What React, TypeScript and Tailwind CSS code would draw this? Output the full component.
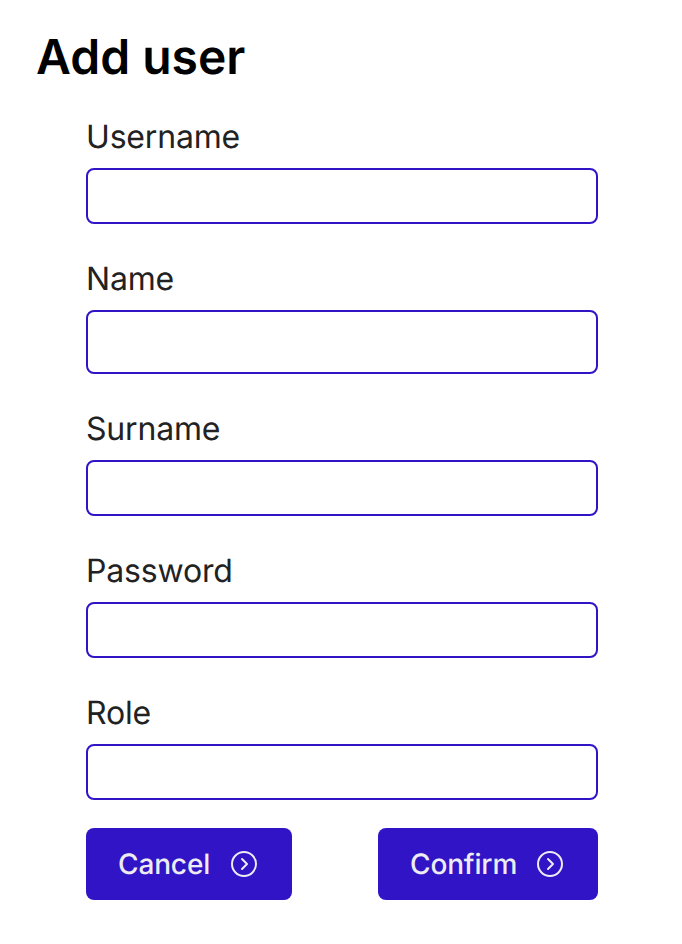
const fields = [
  { label: "Username", box: "h-14" },
  { label: "Name", box: "h-16" },
  { label: "Surname", box: "h-14" },
  { label: "Password", box: "h-14" },
  { label: "Role", box: "h-14" },
];

function ChevronCircle() {
  return (
    <svg className="h-8 w-8" viewBox="0 0 32 32" fill="none" stroke="currentColor" strokeWidth="2">
      <circle cx="16" cy="16" r="12" />
      <path d="M14 11l5 5-5 5" strokeLinecap="round" strokeLinejoin="round" />
    </svg>
  );
}

function ActionButton({ label, size }: { label: string; size: string }) {
  return (
    <button
      type="button"
      className={`flex h-[72px] items-center justify-between rounded-lg bg-[#3114c6] px-8 text-[28px] leading-8 font-medium tracking-[-0.14px] text-[#eeecf3] [text-rendering:geometricPrecision] ${size}`}
    >
      <span>{label}</span>
      <ChevronCircle />
    </button>
  );
}

export default function App() {
  return (
    <main className="h-[944px] w-[682px] bg-white pt-7 font-['Inter',sans-serif] antialiased [text-rendering:geometricPrecision]">
      <h1 className="pl-9 text-[48px] leading-[58px] font-semibold text-black">Add user</h1>
      <form className="ml-[86px] w-[512px] pt-[31px]">
        <div className="flex flex-col gap-[35px]">
          {fields.map((f) => (
            <label key={f.label} className="block text-[32px] leading-[40px] font-normal tracking-[-0.18px] text-[#222222]">
              <span className="block">{f.label}</span>
              <input className={`mt-[11px] block w-full rounded-lg border-2 border-[#3114c6] bg-white px-4 outline-none ${f.box}`} />
            </label>
          ))}
        </div>
        <div className="mt-7 flex justify-between">
          <ActionButton label="Cancel" size="w-[206px]" />
          <ActionButton label="Confirm" size="w-[220px]" />
        </div>
      </form>
    </main>
  );
}
